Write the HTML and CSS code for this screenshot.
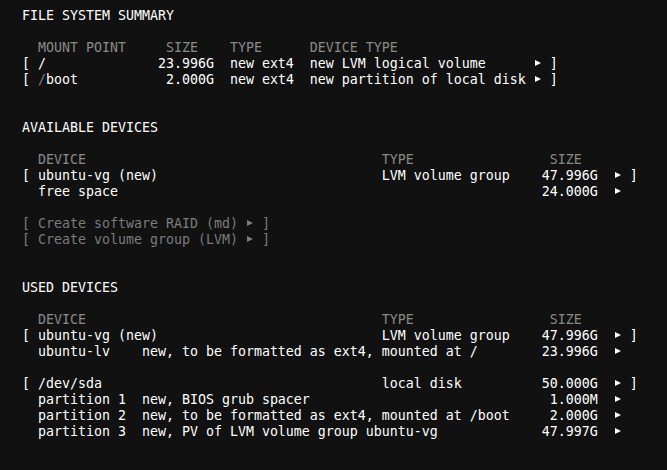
FILE: index.html
```html
<!DOCTYPE html>
<html>
<head>
<meta charset="utf-8">
<link rel="stylesheet" href="styles.css">
</head>
<body>
<main class="screen">
<section class="block">
<div class="row">FILE SYSTEM SUMMARY</div>
<div class="row"> </div>
<div class="row hdr">  MOUNT POINT     SIZE    TYPE      DEVICE TYPE</div>
<div class="row">[ /              23.996G  new ext4  new LVM logical volume      <span class="arr"></span> ]</div>
<div class="row">[ <span class="dim">/</span>boot           2.000G  new ext4  new partition of local disk <span class="arr"></span> ]</div>
<div class="row"> </div>
<div class="row"> </div>
</section>
<section class="block">
<div class="row">AVAILABLE DEVICES</div>
<div class="row"> </div>
<div class="row hdr">  DEVICE                                     TYPE                 SIZE</div>
<div class="row">[ ubuntu-vg (new)                            LVM volume group    47.996G  <span class="arr"></span> ]</div>
<div class="row">  free space                                                     24.000G  <span class="arr"></span></div>
<div class="row"> </div>
<div class="row dim">[ Create software RAID (md) <span class="arr"></span> ]</div>
<div class="row dim">[ Create volume group (LVM) <span class="arr"></span> ]</div>
<div class="row"> </div>
<div class="row"> </div>
</section>
<section class="block">
<div class="row">USED DEVICES</div>
<div class="row"> </div>
<div class="row hdr">  DEVICE                                     TYPE                 SIZE</div>
<div class="row">[ ubuntu-vg (new)                            LVM volume group    47.996G  <span class="arr"></span> ]</div>
<div class="row">  ubuntu-lv    new, to be formatted as ext4, mounted at /        23.996G  <span class="arr"></span></div>
<div class="row"> </div>
<div class="row">[ /dev/sda                                   local disk          50.000G  <span class="arr"></span> ]</div>
<div class="row">  partition 1  new, BIOS grub spacer                              1.000M  <span class="arr"></span></div>
<div class="row">  partition 2  new, to be formatted as ext4, mounted at /boot     2.000G  <span class="arr"></span></div>
<div class="row">  partition 3  new, PV of LVM volume group ubuntu-vg             47.997G  <span class="arr"></span></div>
</section>
</main>
</body>
</html>
```
FILE: styles.css
```css
html, body {
  margin: 0;
  padding: 0;
  background: #111111;
}
.screen {
  display: flex;
  flex-direction: column;
  padding: 8px 22px;
  height: 470px;
  box-sizing: border-box;
  color: #ffffff;
  font-family: "DejaVu Sans Mono", "Liberation Mono", monospace;
  font-size: 13.29px;
  line-height: 16px;
}
.block {
  display: flex;
  flex-direction: column;
}
.row {
  white-space: pre;
  height: 16px;
}
.hdr {
  color: #8a8a8a;
}
.dim {
  color: #7c7c7c;
}
.arr {
  display: inline-block;
  width: 8px;
  height: 16px;
  vertical-align: top;
}
.arr::before {
  content: "";
  display: block;
  width: 0;
  height: 0;
  margin: 4px 0 0 1px;
  border-left: 6px solid currentColor;
  border-top: 3.5px solid transparent;
  border-bottom: 3.5px solid transparent;
}
```
